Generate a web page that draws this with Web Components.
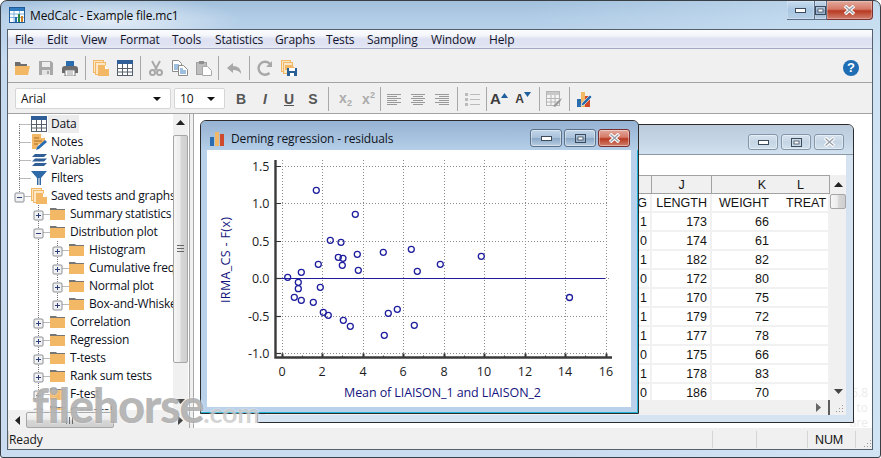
<!DOCTYPE html>
<html lang="en">
<head>
<meta charset="utf-8">
<title>MedCalc</title>
<style>
  html, body { margin: 0; padding: 0; background: #fff; }
  body { font-family: "Open Sans", "Liberation Sans", sans-serif; }
</style>
</head>
<body>
<mc-app></mc-app>
<script>
const GREY = '#a8a8a8';
const ORANGE = '#f2b866';

// icon set, all on a 16x16 box
const ICONS = {
  open: `<path d="M1 2h5l1 2h6v3H1z" fill="#6e6e6e"/><path d="M1 6h15l-2 9H1z" fill="${ORANGE}"/>`,
  save: `<path d="M1 1h12l2 2v12H1z" fill="${GREY}"/><rect x="4" y="2" width="8" height="5" fill="#eee"/><rect x="4" y="10" width="8" height="5" fill="#e4e4e4"/><rect x="9" y="11" width="2" height="3" fill="${GREY}"/>`,
  print: `<rect x="4" y="1" width="8" height="5" fill="#2a6cb0"/><path d="M0 9q0-3 3-3h10q3 0 3 3v4H0z" fill="#6c6c6c"/><rect x="3" y="10" width="10" height="6" fill="#fff" stroke="#777"/><path d="M5 12h6M5 14h6" stroke="#999"/>`,
  pages: `<rect x=".5" y=".5" width="10" height="12" fill="#fbe7c6" stroke="${ORANGE}"/><rect x="2.5" y="2.5" width="10" height="12" fill="#fbe7c6" stroke="${ORANGE}"/><path d="M5 5h7l4 4v7H5z" fill="${ORANGE}"/><path d="M12 5v4h4z" fill="#fff"/>`,
  table: `<rect x=".5" y=".5" width="15" height="15" fill="#fff" stroke="#55606c"/><rect width="16" height="4" fill="#2f5f96"/><path d="M5.5 4v11M10.5 4v11M1 8.5h14M1 12h14" stroke="#55606c"/>`,
  cut: `<path d="M4 1l5 9M12 1L7 10" stroke="${GREY}" stroke-width="2" fill="none"/><circle cx="4.5" cy="12.5" r="2.5" fill="none" stroke="${GREY}" stroke-width="2"/><circle cx="11.5" cy="12.5" r="2.5" fill="none" stroke="${GREY}" stroke-width="2"/>`,
  copy: `<path d="M.5.5h6l3 3v8h-9z" fill="#fff" stroke="#8b8b8b"/><path d="M2 5h5M2 7h5M2 9h5" stroke="#3c7fc0"/><path d="M6.5 5.5h5l4 4v6h-9z" fill="#fff" stroke="#8b8b8b"/><path d="M8 9h3M8 11h6M8 13h6" stroke="#3c7fc0"/>`,
  paste: `<rect x=".5" y="2.5" width="10" height="12" fill="#bdbdbd" stroke="#a0a0a0"/><rect x="3" y="1" width="5" height="3" fill="#8f8f8f"/><path d="M6.5 6.5h5l4 4v5h-9z" fill="#fff" stroke="${GREY}"/>`,
  undo: `<path d="M1 8l6-5v3q8 0 8 8-2-4-8-4v3z" fill="${GREY}"/>`,
  redo: `<path d="M12.5 13A6.5 6.5 0 1 1 13 4" fill="none" stroke="${GREY}" stroke-width="2.4"/><path d="M15 1v6H9z" fill="${GREY}"/>`,
  saveall: `<rect x=".5" y=".5" width="9" height="11" fill="#fbe7c6" stroke="${ORANGE}"/><rect x="2.5" y="2.5" width="9" height="11" fill="#fbe7c6" stroke="${ORANGE}"/><path d="M4 5h7l3 3v2H4z" fill="${ORANGE}"/><path d="M6 8h10v8H6z" fill="#2a5f96"/><rect x="8" y="8" width="6" height="3" fill="#fff"/><rect x="9" y="13" width="4" height="3" fill="#fff"/>`,
  alignl: `<path d="M1 3.5h14M1 5.5h10M1 7.5h14M1 9.5h10M1 11.5h14M1 13.5h10" stroke="#999"/>`,
  alignc: `<path d="M1 3.5h14M3 5.5h10M1 7.5h14M3 9.5h10M1 11.5h14M3 13.5h10" stroke="#999"/>`,
  alignr: `<path d="M1 3.5h14M5 5.5h10M1 7.5h14M5 9.5h10M1 11.5h14M5 13.5h10" stroke="#999"/>`,
  list: `<path d="M1 2h3v3H1zM1 7h3v3H1zM1 12h3v3H1z" fill="#bbb"/><path d="M6 3.5h10M6 8.5h10M6 13.5h10" stroke="#bbb"/>`,
  gridedit: `<rect x=".5" y=".5" width="13" height="14" fill="#f4f4f4" stroke="#b5b5b5"/><rect x="1" y="1" width="12" height="3" fill="#c8c8c8"/><path d="M5 4v10M9 4v10M1 7.5h12M1 11h12" stroke="#b5b5b5"/><path d="M7 15l6-6 3-2-2 4-5 5z" fill="#9a9a9a"/>`,
  chartpen: `<rect x="1" y="8" width="4" height="8" fill="#2a6cb0"/><rect x="5" y="1" width="4" height="15" fill="${ORANGE}"/><rect x="9" y="5" width="5" height="11" fill="#d2492a"/><path d="M5 15l1-3 8-8 2 2-8 8z" fill="#2a6cb0" stroke="#fff" stroke-width=".6"/>`,
  notes: `<path d="M1 0h9l4 4v6H8l-3 5H1z" fill="${ORANGE}"/><path d="M10 0v4h4z" fill="#fff"/><path d="M3 4h5M3 7h8M3 10h4" stroke="#a86c20"/><path d="M5 16l1-3 8-7 2 2-8 7z" fill="#2a6cb0"/>`,
  variables: `<path d="M4 2h12l-3 3H1z" fill="#2f5f96"/><path d="M4 6.5h12l-3 3H1z" fill="#2f5f96"/><path d="M4 11h12l-3 3H1z" fill="#2f5f96"/>`,
  filter: `<path d="M0 1h16l-6 7v7H6V8z" fill="#2f6aa8"/><path d="M7 8h2v7H7z" fill="#9db4ca"/>`,
  folder: `<path d="M0 2h6l1 1h8v3H0z" fill="#767676"/><rect y="4" width="15" height="10" fill="${ORANGE}"/>`,
  appicon: `<rect x=".5" y=".5" width="15" height="15" fill="#fff" stroke="#1d5a96"/><rect x="1" y="1" width="14" height="3" fill="#2f7cc0"/><path d="M1 7h14M1 10.5h14M5 4v11M10.5 4v11" stroke="#7fb2dc"/><rect x="6" y="10" width="2" height="5" fill="#1f6fb5"/><rect x="9" y="7" width="2" height="8" fill="#2a8a40"/><rect x="12" y="9" width="2" height="6" fill="#d08020"/>`,
  titlebars: `<rect x="0" y="5" width="4" height="9" fill="#2a6cb0"/><rect x="5" y="0" width="4" height="14" fill="${ORANGE}"/><rect x="10" y="2" width="4" height="12" fill="#cf4a2c"/>`
};

const svgIcon = (name, w = 16, h = 16) =>
  `<svg width="${w}" height="${h}" viewBox="0 0 16 16" aria-hidden="true">${ICONS[name] || ''}</svg>`;

// toolbar button, holds an icon or a slotted glyph
class McBtn extends HTMLElement {
  connectedCallback() {
    const w = this.getAttribute('w') || 24;
    const icon = this.getAttribute('icon');
    this.attachShadow({ mode: 'open' }).innerHTML = `
      <style>
        :host { display: flex; align-items: center; justify-content: center; width: ${w}px; height: 100%; flex: none;
          font: bold 14px "Liberation Sans", sans-serif; color: #555; }
      </style>
      ${icon ? svgIcon(icon) : '<slot></slot>'}`;
  }
}

class McSep extends HTMLElement {
  connectedCallback() {
    const l = this.getAttribute('l') || 3, r = this.getAttribute('r') || 3;
    this.attachShadow({ mode: 'open' }).innerHTML = `
      <style>
        :host { display: block; flex: none; width: 1px; margin: 0 ${r}px 0 ${l}px; background: #a8a8a8; align-self: stretch; }
      </style>`;
  }
}

class McCombo extends HTMLElement {
  connectedCallback() {
    this.attachShadow({ mode: 'open' }).innerHTML = `
      <style>
        :host { display: flex; align-items: center; box-sizing: border-box; height: 21px; flex: none; padding: 0 6px 0 5px;
          background: #fff; border: 1px solid #d6d6d6; border-radius: 2px; font-size: 12px; letter-spacing: -.1px; color: #111; }
        .v { flex: 1; }
        .a { width: 0; height: 0; border-style: solid; border-color: #111 transparent transparent; border-width: 4px 4.5px 0; margin-right: 3px; }
      </style>
      <span class="v"><slot></slot></span><span class="a"></span>`;
  }
}

class McCaptionButtons extends HTMLElement {
  connectedCallback() {
    const glyphMin = c => `<svg width="11" height="5"><rect x=".5" y=".5" width="10" height="4" fill="#fff" stroke="${c}"/></svg>`;
    const glyphMax = c => `<svg width="11" height="9"><rect x=".5" y=".5" width="10" height="8" fill="none" stroke="${c}"/><rect x="3" y="3" width="5" height="3" fill="#fff" stroke="${c}" stroke-width=".8"/></svg>`;
    const glyphClose = c => `<svg width="13" height="10"><path d="M2 1l9 8M11 1l-9 8" stroke="#fff" stroke-width="3.6"/><path d="M2.5 1.5l8 7M10.5 1.5l-8 7" stroke="${c}" stroke-width="1.2" opacity=".55"/></svg>`;
    const c = '#3c4a5c';
    this.attachShadow({ mode: 'open' }).innerHTML = `
      <style>
        :host { display: flex; flex: none; }
        .b { display: flex; align-items: center; justify-content: center; box-sizing: border-box; border: 1px solid #5c7088;
          background: linear-gradient(#c2d6ea 0, #a9c1da 48%, #8ba8c6 52%, #b9cfe4 100%); }
        .x { background: linear-gradient(#e2a99c 0, #d67a68 45%, #b83a22 55%, #d0806e 100%); border-color: #7a3030; }

        :host([variant=main]) { align-self: flex-start; }
        :host([variant=main]) .b { height: 19px; border-top: 0; border-left: 0; box-shadow: inset 0 0 0 1px rgba(255,255,255,.25);}
        :host([variant=main]) .b:first-child { border-left: 1px solid #5c7088; border-radius: 0 0 0 4px; width: 27px; }
        :host([variant=main]) .b:nth-child(2) { width: 28px; background: linear-gradient(#c8dcef, #a9c6e2 50%, #b7cfe6); }
        :host([variant=main]) .b.x { width: 46px; border-radius: 0 0 4px 0; }

        :host([variant=active]) { gap: 2px; }
        :host([variant=active]) .b { width: 32px; height: 18px; border-radius: 3px; box-shadow: inset 0 0 0 1px rgba(255,255,255,.4); }

        :host([variant=inactive]) { gap: 3px; }
        :host([variant=inactive]) .b { width: 30px; height: 16px; border-radius: 3px; border-color: #8496aa;
          background: linear-gradient(#d8e4ef, #c5d5e4 50%, #d2e0ec); box-shadow: inset 0 0 0 1px rgba(255,255,255,.4); }
      </style>
      <div class="b">${glyphMin(c)}</div><div class="b">${glyphMax(c)}</div><div class="b x">${glyphClose(c)}</div>`;
  }
}

class McTitlebar extends HTMLElement {
  connectedCallback() {
    this.attachShadow({ mode: 'open' }).innerHTML = `
      <style>
        :host { display: flex; align-items: center; height: 28px; box-sizing: border-box; padding-left: 2px;
          font-size: 12px; letter-spacing: -.16px; color: #0c0c0c; }
        .t { margin-left: 5px; flex: 1; margin-top: 1px; }
      </style>
      ${svgIcon('appicon')}<span class="t"><slot></slot></span><mc-caption-buttons variant="main"></mc-caption-buttons>`;
  }
}

class McMenubar extends HTMLElement {
  connectedCallback() {
    const items = this.getAttribute('items').split(',');
    // widths from one label start to the next
    const widths = [32, 34, 39, 52, 43, 60, 51, 41, 64, 58, 40];
    this.attachShadow({ mode: 'open' }).innerHTML = `
      <style>
        :host { display: grid; grid-template-columns: ${widths.map(w => w + 'px').join(' ')}; align-items: center;
          height: 19px; box-sizing: border-box; padding-left: 7px; border-bottom: 1px solid #a5a9c6;
          background: linear-gradient(#fbfcfe 0, #f4f6fb 30%, #dde1f1 50%, #dfe3f2 85%, #e8ebf5 100%);
          font-size: 12px; letter-spacing: -.12px; color: #14142a; }
      </style>
      ${items.map(i => `<span>${i}</span>`).join('')}`;
  }
}

class McToolbar extends HTMLElement {
  connectedCallback() {
    this.attachShadow({ mode: 'open' }).innerHTML = `
      <style>
        :host { display: flex; box-sizing: border-box; background: #f0f0f0; border-bottom: 1px solid #a3a3a3; }
      </style>
      <slot></slot>`;
  }
}

class McScrollbar extends HTMLElement {
  connectedCallback() {
    const h = this.getAttribute('orient') === 'h';
    const start = this.getAttribute('start') || 0;
    const size = this.getAttribute('size') || 0;
    const cap = this.getAttribute('cap') || 17;
    const tri = (dir, c = '#222') => {
      const map = {
        u: 'M0 5L4.5 0 9 5z', d: 'M0 0h9L4.5 5z', l: 'M5 0v9L0 4.5z', r: 'M0 0v9l5-4.5z'
      };
      const [w, hh] = dir === 'u' || dir === 'd' ? [9, 5] : [5, 9];
      return `<svg width="${w}" height="${hh}"><path d="${map[dir]}" fill="${c}"/></svg>`;
    };
    const grip = h
      ? `<svg width="8" height="7"><path d="M.5 0v7M3.5 0v7M6.5 0v7" stroke="#666"/></svg>`
      : `<svg width="7" height="8"><path d="M0 .5h7M0 3.5h7M0 6.5h7" stroke="#666"/></svg>`;
    this.attachShadow({ mode: 'open' }).innerHTML = `
      <style>
        :host { display: flex; flex: none; flex-direction: ${h ? 'row' : 'column'}; background: #f0f0f0; box-sizing: border-box; }
        .cap { flex: 0 0 ${cap}px; display: flex; align-items: center; justify-content: center; }
        .track { flex: 1; display: flex; flex-direction: ${h ? 'row' : 'column'}; min-width: 0; min-height: 0; padding-${h ? 'left' : 'top'}: ${start}px; }
        .thumb { box-sizing: border-box; ${h ? 'width' : 'height'}: ${size}px; flex: none; display: flex; align-items: center; justify-content: center;
          border: 1px solid #a6a6a6; border-radius: 2px;
          background: linear-gradient(${h ? '180deg' : '90deg'}, #f6f6f6, #ececec 45%, #d6d6d6 55%, #cfcfcf); }
      </style>
      <div class="cap">${tri(h ? 'l' : 'u')}</div>
      <div class="track"><div class="thumb">${this.hasAttribute('nogrip') ? '' : grip}</div></div>
      <div class="cap">${tri(h ? 'r' : 'd', '#444')}</div>`;
  }
}

class McTreeRow extends HTMLElement {
  connectedCallback() {
    const level = +this.getAttribute('level') || 0;
    const lines = (this.getAttribute('lines') || '').split(' ').filter(Boolean);
    const toggle = this.getAttribute('toggle');
    const center = 11 + 19 * level;
    const w = center + 12;
    const cx = c => 11 + 19 * c + .5;
    let d = lines.map(t => {
      const c = parseInt(t);
      const part = t.replace(/\d+/, '');
      const y1 = part === 'b' ? 9 : 0, y2 = part === 't' ? 9 : 18;
      return `<line x1="${cx(c)}" x2="${cx(c)}" y1="${y1}" y2="${y2}"/>`;
    }).join('');
    d += `<line x1="${center + .5}" x2="${w}" y1="9.5" y2="9.5"/>`;
    let box = '';
    if (toggle) {
      box = `<rect x="${center - 4}" y="6" width="9" height="9" rx="1" fill="#f2f2f2" stroke="#8a8f96"/>
        <path d="M${center - 2} 10.5h5${toggle === '+' ? `M${center + .5} 8v5` : ''}" stroke="#2c3f7a"/>`;
    }
    this.attachShadow({ mode: 'open' }).innerHTML = `
      <style>
        :host { display: flex; align-items: center; height: 18px; flex: none; white-space: nowrap; font-size: 12px; letter-spacing: -.22px; color: #0c1020; }
        svg.c { flex: none; }
        .i { flex: none; width: 16px; height: 16px; margin-right: 3px; }
        .l { padding: 0 2px; line-height: 16px; margin-left: -1px; }
        :host([selected]) .l { background: #ececec; outline: 1px solid #ececec; }
      </style>
      <svg class="c" width="${w}" height="18">
        <g stroke="#777" stroke-dasharray="1 1" fill="none">${d}</g>${box}
      </svg>
      <span class="i">${svgIcon(this.getAttribute('icon'))}</span>
      <span class="l"><slot></slot></span>`;
  }
}

class McTree extends HTMLElement {
  connectedCallback() {
    this.attachShadow({ mode: 'open' }).innerHTML = `
      <style>
        :host { display: flex; flex-direction: column; flex: 1; min-width: 0; overflow: hidden; padding-top: 1px; background: #fff; }
      </style>
      <slot></slot>`;
  }
}

class McWindow extends HTMLElement {
  connectedCallback() {
    const active = this.hasAttribute('active');
    const icon = this.getAttribute('icon');
    this.attachShadow({ mode: 'open' }).innerHTML = `
      <style>
        :host { position: absolute; display: flex; flex-direction: column; box-sizing: border-box;
          border: 1px solid #2c2c2c; border-radius: 6px 6px 0 0; }
        :host([active]) { background: #b9d1ea; box-shadow: inset -1px -1px 0 #1fb4d8; }
        :host(:not([active])) { background: #d6e4f2; }
        .bar { flex: none; display: flex; align-items: flex-start; box-sizing: border-box; }
        :host([active]) .bar { height: 29px; padding: 8px 8px 0 9px; background: linear-gradient(#97b3d3, #a8c3df 60%, #b5cfe9); border-radius: 5px 5px 0 0; }
        :host(:not([active])) .bar { height: 30px; padding: 9px 9px 0 0; background: linear-gradient(#bccbdc, #c5d5e5 55%, #d2e1ef); border-radius: 5px 5px 0 0; border-bottom: 1px solid #8a97a6; }
        .ic { flex: none; margin: 2px 5px 0 0; }
        .t { flex: 1; font-size: 12px; letter-spacing: -.13px; color: #10141c; line-height: 20px; }
        .body { flex: 1; min-height: 0; display: flex; flex-direction: column; background: #fff; overflow: hidden; }
        :host([active]) .body { margin: 0 7px 6px 6px; }
        :host(:not([active])) .body { margin: 0 7px 7px 7px; }
      </style>
      <div class="bar">
        ${icon ? `<span class="ic">${svgIcon(icon, 16, 16)}</span>` : ''}
        <span class="t">${this.getAttribute('caption') || ''}</span>
        <mc-caption-buttons variant="${active ? 'active' : 'inactive'}"></mc-caption-buttons>
      </div>
      <div class="body"><slot></slot></div>`;
  }
}

class McDemingChart extends HTMLElement {
  connectedCallback() {
    const points = [
      [316.3,190.3],[355.3,214.3],[330.3,240.3],[341,242.3],[338.3,257.3],[343,258.3],[342.3,265.3],
      [357.3,254.3],[383.3,252.3],[411.3,249.3],[417.3,271.3],[440.3,264.3],[358.3,270.3],[318.3,264.3],
      [301.3,272.3],[287.7,277.3],[298.3,282.3],[298.3,288.7],[320.3,287.3],[294.3,297.3],[301.3,300.3],
      [313.3,302.3],[323.3,312.3],[328.3,315.3],[343.3,320.3],[350.3,326.3],[384.3,335.3],[388.3,313.3],
      [397.3,309.3],[414.3,325.3],[481.3,256.3],[569.5,297.5]
    ];
    const X0 = 281.5, STEP = 20.25;
    const xs = [0, 2, 4, 6, 8, 10, 12, 14, 16].map(v => [v, Math.round(X0 + v * STEP) + .5]);
    const ys = [['1.5', 166.5], ['1.0', 203.5], ['0.5', 241.5], ['0.0', 278.5], ['-0.5', 316.5], ['-1.0', 353.5]];
    let s = '';
    ys.forEach(([, y]) => {
      if (y !== 278.5) s += `<line x1="276" x2="609" y1="${y}" y2="${y}" class="g"/>`;
    });
    s += `<line x1="605" x2="609" y1="278.5" y2="278.5" class="g"/>`;
    xs.forEach(([, x]) => {
      s += `<line x1="${x}" x2="${x}" y1="160" y2="356" class="g"/>`;
    });
    s += `<line x1="276" x2="605" y1="278.5" y2="278.5" stroke="#1c1c9c"/>`;
    // labelled ticks are long, odd values short
    ys.forEach(([, y]) => { s += `<line x1="276" x2="281" y1="${y}" y2="${y}" stroke="#333" stroke-width="1.2"/>`; });
    for (let v = 0; v <= 16; v++) {
      const x = Math.round(X0 + v * STEP) + .5;
      s += v % 2
        ? `<line x1="${x}" x2="${x}" y1="355.5" y2="357" stroke="#444"/>`
        : `<line x1="${x}" x2="${x}" y1="353.5" y2="357" stroke="#333" stroke-width="2"/>`;
    }
    s += `<path d="M275.5 160V357.5H612" fill="none" stroke="#3a3a3a" stroke-width="2.4"/>`;
    points.forEach(([x, y]) => { s += `<circle cx="${x}" cy="${y}" r="3" class="p"/>`; });
    ys.forEach(([l, y]) => { s += `<text x="269.5" y="${y + 4}" text-anchor="end" class="n">${l}</text>`; });
    xs.forEach(([v, x]) => { s += `<text x="${x - .5}" y="376" text-anchor="middle" class="n">${v}</text>`; });
    s += `<text x="344" y="397" class="a" textLength="197" lengthAdjust="spacing">Mean of LIAISON_1 and LIAISON_2</text>`;
    s += `<text transform="translate(230 303) rotate(-90)" class="a" textLength="86" lengthAdjust="spacing">IRMA_CS - F(x)</text>`;
    this.attachShadow({ mode: 'open' }).innerHTML = `
      <style>
        :host { display: block; flex: 1; min-height: 0; }
        svg { display: block; }
        .g { stroke: #8c8c8c; stroke-dasharray: 1 2; }
        .p { fill: none; stroke: #1d1d9e; stroke-width: 1.3; }
        .n { font-size: 12.5px; fill: #1c1c1c; }
        .a { font-size: 12.5px; fill: #14147e; }
      </style>
      <svg width="424" height="257" viewBox="207 150 424 257" font-family='"Open Sans", "Liberation Sans", sans-serif'>${s}</svg>`;
  }
}

class McDataGrid extends HTMLElement {
  connectedCallback() {
    const rows = [[1,173,66],[0,174,61],[1,182,82],[0,172,80],[1,170,75],[1,179,72],[1,177,78],[0,175,66],[1,178,83],[0,186,70]];
    const cell = (t, cls = '') => `<div class="c ${cls}">${t}</div>`;
    let h = cell('', 'h') + cell('J', 'h') + cell('K', 'h') + cell('L', 'h');
    h += cell('G', 'n') + cell('LENGTH', 'n') + cell('WEIGHT', 'n') + cell('TREAT', 'n clip');
    rows.forEach(r => { h += cell(r[0]) + cell(r[1]) + cell(r[2]) + cell(''); });
    this.attachShadow({ mode: 'open' }).innerHTML = `
      <style>
        :host { display: grid; flex: 1; min-width: 0; overflow: hidden; align-content: start; background: #fff;
          grid-template-columns: 1fr 60px 60px 58px; grid-auto-rows: 19px;
          font: 12.5px "Liberation Sans", sans-serif; color: #141414; }
        .c { box-sizing: border-box; text-align: right; padding-right: 3px; line-height: 19px; white-space: nowrap; overflow: hidden;
          border-right: 2px solid #f1f1f1; border-bottom: 2px solid #f1f1f1; }
        .h { background: #f0f0f0; text-align: center; border-right: 1px solid #a2a2a2; border-bottom: 1px solid #a2a2a2; border-top: 1px solid #a2a2a2; padding-right: 0; line-height: 18px; }
        .c.h:nth-child(4) { text-align: right; padding-right: 6px; border-right: 0; }
        .clip { padding-right: 0; text-align: left; padding-left: 14px; }
        .c:nth-child(4n) { border-right: 0; }
      </style>
      ${h}`;
  }
}

class McStatusbar extends HTMLElement {
  connectedCallback() {
    this.attachShadow({ mode: 'open' }).innerHTML = `
      <style>
        :host { display: grid; grid-template-columns: 1fr 44px 51px 48px 17px; background: #f0f0f0; font-size: 12px; letter-spacing: -.1px; color: #151515; align-items: stretch; padding-top: 3px; box-sizing: border-box; height: 21px; }
        span { display: flex; align-items: center; border-left: 1px solid #d4d4d4; margin-bottom: 2px; }
        span:first-child { border-left: 0; padding-left: 5px; }
        .num { padding-left: 7px; font: 12.5px "Liberation Sans", sans-serif; }
        .grip { justify-content: flex-end; align-items: flex-end; }
      </style>
      <span>Ready</span><span></span><span></span><span class="num">NUM</span>
      <span class="grip"><svg width="8" height="8"><path d="M6 0h1v1H6zM3 3h1v1H3zM6 3h1v1H6zM0 6h1v1H0zM3 6h1v1H3zM6 6h1v1H6z" fill="#999"/></svg></span>`;
  }
}

class McApp extends HTMLElement {
  connectedCallback() {
    const row = (level, lines, icon, label, extra = '') =>
      `<mc-tree-row level="${level}" lines="${lines}" icon="${icon}" ${extra}>${label}</mc-tree-row>`;
    this.attachShadow({ mode: 'open' }).innerHTML = `
      <style>
        :host { display: flex; flex-direction: column; position: relative; box-sizing: border-box; width: 881px; height: 458px;
          padding: 0 7px 7px 6px; border: 1px solid #3a3f46; border-radius: 7px 7px 3px 3px; overflow: hidden;
          background:
            radial-gradient(ellipse 130px 26px at 110px 20px, rgba(255,255,255,.62), rgba(255,255,255,0)),
            linear-gradient(90deg, transparent 60%, rgba(215,235,248,.55) 100%),
            linear-gradient(#a2c0dc 0, #b2cde7 18px, #c6daef 60px, #cadcf0 100%); }
        .client { flex: 1; min-height: 0; min-width: 0; display: flex; flex-direction: column; border: 1px solid #55606c; background: #f0f0f0; }
        .tb1 { height: 34px; padding: 7px 0 3px 2px; align-items: center; }
        .tb1 mc-sep { height: 24px; align-self: center; }
        .tb2 { height: 31px; padding: 4px 0 3px 7px; align-items: center; }
        .tb2 mc-sep { height: 24px; align-self: center; }
        .combo2 { margin-left: 3px; margin-right: 4px; }
        .main { flex: 1; min-height: 0; display: flex; }
        .pane { flex: 0 0 181px; min-width: 0; display: flex; flex-direction: column; min-height: 0; }
        .pane-top { flex: 1; min-height: 0; min-width: 0; display: flex; background: #fff; }
        .splitter { flex: 0 0 5px; box-sizing: border-box; background: #f0f0f0; border-left: 1px solid #a8a8a8; border-right: 1px solid #a8a8a8; }
        .mdi { flex: 1; min-width: 0; position: relative; overflow: hidden; background: #fff; }
        .faint { position: absolute; right: 4px; top: 271px; font-size: 12px; line-height: 15px; text-align: right; color: #ececec; }
        .band { flex: 0 0 20px; background: #fff; }
        .grid-row { flex: 1; min-height: 0; display: flex; }
        .hs-row { flex: 0 0 15px; display: flex; background: #f0f0f0; }
        .hs-row .sp { flex: 1; }
        .hs-row .arrow { flex: 0 0 12px; align-self: center; display: flex; }
        .hs-row .edge { flex: 0 0 2px; background: #5c5c5c; }
        .hs-row .corner { flex: 0 0 16px; display: flex; align-items: flex-end; justify-content: flex-end; padding: 0 2px 2px 0; box-sizing: border-box; }
        .chart-win { left: 6px; top: 6px; width: 439px; height: 294px; z-index: 2; }
        .data-win { left: 63px; top: 10px; width: 597px; height: 299px; z-index: 1; }
        .sub { font-size: 9px; vertical-align: -3px; }
        .sup { font-size: 9px; vertical-align: 6px; }
        .off { color: #ababab; }
        .up, .dn { display: flex; align-items: flex-start; color: #3c3c3c; font-size: 15px; }
        .dn { font-size: 12px; align-items: center; }
        .tri { margin-top: 3px; }
        .mark { position: absolute; left: 31px; top: 380px; z-index: 5; display: flex; align-items: baseline; pointer-events: none;
          font-family: Lato, "Open Sans", sans-serif; color: rgba(112,112,112,.5);
          text-shadow: 0 0 2px rgba(255,255,255,.9); white-space: nowrap; line-height: 48px; }
        .mark b { font-size: 47px; font-weight: 900; letter-spacing: -1.4px; }
        .mark i { font-style: normal; font-size: 27px; font-weight: 700; letter-spacing: -.2px; color: rgba(130,130,130,.35); }
      </style>
      <mc-titlebar>MedCalc - Example file.mc1</mc-titlebar>
      <div class="client">
        <mc-menubar items="File,Edit,View,Format,Tools,Statistics,Graphs,Tests,Sampling,Window,Help"></mc-menubar>
        <mc-toolbar class="tb1">
          <mc-btn icon="open"></mc-btn><mc-btn icon="save"></mc-btn><mc-btn icon="print"></mc-btn>
          <mc-sep></mc-sep>
          <mc-btn icon="pages"></mc-btn><mc-btn icon="table"></mc-btn>
          <mc-sep></mc-sep>
          <mc-btn icon="cut"></mc-btn><mc-btn icon="copy"></mc-btn><mc-btn icon="paste"></mc-btn>
          <mc-sep l="2" r="3"></mc-sep>
          <mc-btn icon="undo"></mc-btn>
          <mc-sep></mc-sep>
          <mc-btn icon="redo"></mc-btn><mc-btn icon="saveall"></mc-btn>
          <span style="flex:1"></span>
          <svg width="18" height="18" viewBox="0 0 18 18" style="margin:0 12px 0 0">
            <circle cx="9" cy="9" r="8" fill="#1f6db4"/>
            <text x="9" y="13.4" text-anchor="middle" fill="#fff" font-family="Liberation Sans" font-weight="700" font-size="13">?</text>
          </svg>
        </mc-toolbar>
        <mc-toolbar class="tb2">
          <mc-combo style="width:156px">Arial</mc-combo>
          <mc-combo class="combo2" style="width:51px">10</mc-combo>
          <mc-btn>B</mc-btn>
          <mc-btn><i style="font-family:'Liberation Sans'">I</i></mc-btn>
          <mc-btn><u>U</u></mc-btn>
          <mc-btn>S</mc-btn>
          <mc-sep l="3" r="5"></mc-sep>
          <mc-btn w="23"><span class="off">x<span class="sub">2</span></span></mc-btn>
          <mc-btn w="23"><span class="off">x<span class="sup">2</span></span></mc-btn>
          <mc-sep l="0" r="1"></mc-sep>
          <mc-btn icon="alignl"></mc-btn><mc-btn icon="alignc"></mc-btn><mc-btn icon="alignr"></mc-btn>
          <mc-sep l="3" r="2"></mc-sep>
          <mc-btn icon="list"></mc-btn>
          <mc-sep l="2" r="0"></mc-sep>
          <mc-btn><span class="up">A<svg class="tri" width="7" height="5"><path d="M0 5L3.5 0 7 5z" fill="#1f5f9e"/></svg></span></mc-btn>
          <mc-btn><span class="dn">A<svg width="7" height="5" style="margin-bottom:8px"><path d="M0 0h7L3.5 5z" fill="#1f5f9e"/></svg></span></mc-btn>
          <mc-sep l="4" r="2"></mc-sep>
          <mc-btn icon="gridedit"></mc-btn>
          <mc-sep l="3" r="2"></mc-sep>
          <mc-btn icon="chartpen"></mc-btn>
        </mc-toolbar>
        <div class="main">
          <div class="pane">
            <div class="pane-top">
              <mc-tree>
                ${row(0, '0b', 'table', 'Data', 'selected')}
                ${row(0, '0', 'notes', 'Notes')}
                ${row(0, '0', 'variables', 'Variables')}
                ${row(0, '0', 'filter', 'Filters')}
                ${row(0, '0t', 'pages', 'Saved tests and graphs', 'toggle="-"')}
                ${row(1, '1', 'folder', 'Summary statistics', 'toggle="+"')}
                ${row(1, '1', 'folder', 'Distribution plot', 'toggle="-"')}
                ${row(2, '1 2', 'folder', 'Histogram', 'toggle="+"')}
                ${row(2, '1 2', 'folder', 'Cumulative frequency', 'toggle="+"')}
                ${row(2, '1 2', 'folder', 'Normal plot', 'toggle="+"')}
                ${row(2, '1 2t', 'folder', 'Box-and-Whisker', 'toggle="+"')}
                ${row(1, '1', 'folder', 'Correlation', 'toggle="+"')}
                ${row(1, '1', 'folder', 'Regression', 'toggle="+"')}
                ${row(1, '1', 'folder', 'T-tests', 'toggle="+"')}
                ${row(1, '1', 'folder', 'Rank sum tests', 'toggle="+"')}
                ${row(1, '1', 'folder', 'F-test', 'toggle="+"')}
                ${row(1, '1', 'folder', 'General', 'toggle="+"')}
              </mc-tree>
              <mc-scrollbar orient="v" start="4" size="228" cap="17" style="width:15px;margin-right:1px"></mc-scrollbar>
            </div>
            <mc-scrollbar orient="h" start="0" size="88" cap="18" style="height:18px;padding-top:2px"></mc-scrollbar>
          </div>
          <div class="splitter"></div>
          <div class="mdi">
            <div class="faint">5.8<br>d to<br>are</div>
            <mc-window class="data-win" caption="">
              <div class="band"></div>
              <div class="grid-row">
                <mc-data-grid></mc-data-grid>
                <mc-scrollbar orient="v" start="1" size="15" cap="18" nogrip style="width:16px"></mc-scrollbar>
              </div>
              <div class="hs-row">
                <span class="sp"></span>
                <span class="arrow"><svg width="5" height="9"><path d="M0 0v9l5-4.5z" fill="#666"/></svg></span>
                <span class="edge"></span>
                <span class="corner"><svg width="8" height="8"><path d="M6 0h1v1H6zM3 3h1v1H3zM6 3h1v1H6zM0 6h1v1H0zM3 6h1v1H3zM6 6h1v1H6z" fill="#999"/></svg></span>
              </div>
            </mc-window>
            <mc-window class="chart-win" active icon="titlebars" caption="Deming regression - residuals">
              <mc-deming-chart></mc-deming-chart>
            </mc-window>
          </div>
        </div>
        <mc-statusbar></mc-statusbar>
      </div>
      <div class="mark"><b>filehorse</b><i>.com</i></div>`;
  }
}

customElements.define('mc-btn', McBtn);
customElements.define('mc-sep', McSep);
customElements.define('mc-combo', McCombo);
customElements.define('mc-caption-buttons', McCaptionButtons);
customElements.define('mc-titlebar', McTitlebar);
customElements.define('mc-menubar', McMenubar);
customElements.define('mc-toolbar', McToolbar);
customElements.define('mc-scrollbar', McScrollbar);
customElements.define('mc-tree-row', McTreeRow);
customElements.define('mc-tree', McTree);
customElements.define('mc-window', McWindow);
customElements.define('mc-deming-chart', McDemingChart);
customElements.define('mc-data-grid', McDataGrid);
customElements.define('mc-statusbar', McStatusbar);
customElements.define('mc-app', McApp);
</script>
</body>
</html>
